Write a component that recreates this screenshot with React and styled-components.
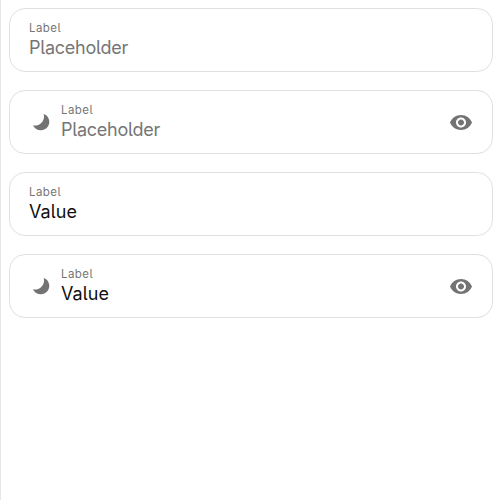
import React from 'react';
import styled, { createGlobalStyle } from 'styled-components';

const GlobalStyle = createGlobalStyle`
  * { box-sizing: border-box; }
  body { margin: 0; background: #fff; font-family: Inter, "Noto Sans", sans-serif; font-feature-settings: "cv05"; font-weight: 400; }
`;
const Page = styled.main`
  min-height: 100vh;
  border-left: 1px solid #e6e6e6;
  padding: 8px 7px 8px 8px;
  display: flex;
  flex-direction: column;
  gap: 18px;
`;
const Field = styled.div`
  height: 64px;
  border: 1px solid #e0e0e0;
  border-radius: 16px;
  padding: 0 19px;
  display: flex;
  align-items: center;
`;
const IconBox = styled.span`
  display: flex;
  width: 24px;
  height: 24px;
  color: #737373;
  margin-right: ${p => (p.$start ? '8px' : 0)};
  svg { width: 24px; height: 24px; }
`;
const TextBlock = styled.div`
  flex: 1;
  height: 40px;
  display: flex;
  flex-direction: column;
`;
const Label = styled.span`
  font-size: 11.5px;
  line-height: 16px;
  letter-spacing: 0.45px;
  color: #767676;
`;
const Content = styled.span`
  font-size: 18px;
  line-height: 24px;
  letter-spacing: ${p => (p.$filled ? '0.1px' : '-0.25px')};
  color: ${p => (p.$filled ? '#111' : '#767676')};
`;
const Moon = () => (
  <svg viewBox="0 0 24 24" fill="currentColor"><path d="M14.700 3.900C18.200 5.100 20.300 8.200 20.300 11.800C20.300 16.600 16.700 20.200 12 20.200C8.400 20.200 5.200 18.200 3.900 15.200C6.800 15.900 9.700 15.200 12.200 12.900C14.900 10.400 15.600 7.200 14.700 3.900Z" /></svg>
);
const Eye = () => (
  <svg viewBox="0 0 24 24" fill="currentColor"><path d="M12 5C7 5 2.730 8.110 1 12.500c1.730 4.390 6 7.500 11 7.500s9.270-3.110 11-7.500c-1.730-4.390-6-7.500-11-7.500zM12 17.500c-2.760 0-5-2.240-5-5s2.240-5 5-5 5 2.240 5 5-2.240 5-5 5zm0-8c-1.660 0-3 1.340-3 3s1.340 3 3 3 3-1.340 3-3-1.340-3-3-3z" /></svg>
);
const TextField = ({ icons, value }) => (
  <Field>
    {icons && <IconBox $start><Moon /></IconBox>}
    <TextBlock>
      <Label>Label</Label>
      <Content $filled={!!value}>{value || 'Placeholder'}</Content>
    </TextBlock>
    {icons && <IconBox><Eye /></IconBox>}
  </Field>
);
export default function App() {
  return (
    <>
      <GlobalStyle />
      <Page>
        <TextField />
        <TextField icons />
        <TextField value="Value" />
        <TextField icons value="Value" />
      </Page>
    </>
  );
}
